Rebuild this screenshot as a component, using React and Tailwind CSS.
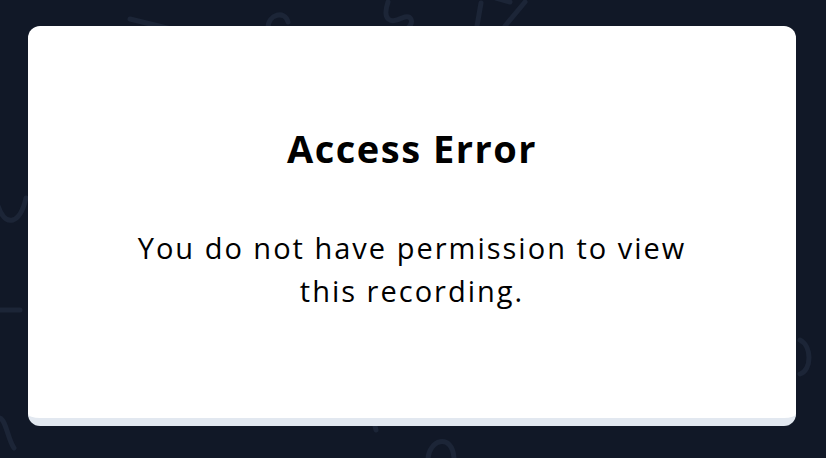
import React from "react";

export default function App() {
  return (
    <div className="relative w-[826px] h-[458px] overflow-hidden bg-[#111827]" style={{ fontFamily: "'Open Sans', 'Noto Sans', sans-serif" }}>
      <svg className="absolute inset-0" width="826" height="458" viewBox="0 0 826 458" fill="none" stroke="#1c2537" strokeWidth="5" strokeLinecap="round" strokeLinejoin="round">
        <path d="M130 19 L175 30" />
        <path d="M268 28 C268 14 285 10 288 22" />
        <path d="M388 2 C382 20 390 24 402 18 C412 14 414 22 408 28" />
        <path d="M481 3 L477 26" />
        <path d="M505 26 L525 2" />
        <path d="M496 -2 L510 2" />
        <path d="M-2 206 C6 228 20 224 26 198" />
        <path d="M-2 310 L20 310" />
        <path d="M0 418 C6 420 8 440 14 448" />
        <path d="M374 422 L376 430" />
        <path d="M428 460 C428 440 452 432 454 458" />
        <path d="M800 340 C812 346 812 370 800 374" />
      </svg>
      <div className="relative ml-[28px] mt-[26px] w-[768px] h-[400px] rounded-[12px] bg-white border-b-[8px] border-[#e2e8f0] pb-[6px] flex flex-col items-center justify-center text-black">
        <h1 className="text-[38px] font-bold leading-[44px] tracking-[1.5px]">Access Error</h1>
        <p className="mt-[56px] text-[29px] leading-[43px] text-center w-[600px] tracking-[2px]">
          You do not have permission to view this recording.
        </p>
      </div>
    </div>
  );
}
